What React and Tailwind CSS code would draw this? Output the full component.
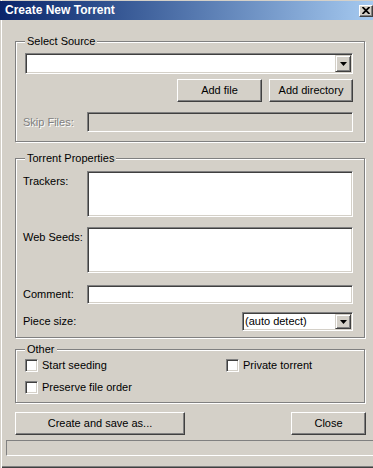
const sunken =
  'border border-t-[#808080] border-l-[#808080] border-b-white border-r-white shadow-[inset_1px_1px_0_#404040,inset_-1px_-1px_0_#d4d0c8]'
const raised =
  'border border-t-white border-l-white border-b-[#404040] border-r-[#404040] shadow-[inset_-1px_-1px_0_#808080] bg-[#d4d0c8]'
const group =
  'border border-[#808080] shadow-[inset_1px_1px_0_#fff,1px_1px_0_#fff] p-0 m-0 min-w-0'

function DropButton() {
  return (
    <div className="w-[16px] flex items-center justify-center bg-[#d4d0c8] border border-t-[#d4d0c8] border-l-[#d4d0c8] border-b-[#404040] border-r-[#404040] shadow-[inset_1px_1px_0_#fff,inset_-1px_-1px_0_#808080]">
      <svg width="7" height="4" viewBox="0 0 7 4">
        <polygon points="0,0 7,0 3.5,4" fill="#000" />
      </svg>
    </div>
  )
}

function Combo({ className, children }) {
  return (
    <div className={`${sunken} bg-white flex p-[1px] ${className}`}>
      <div className="flex-1 flex items-center pl-[1px]">{children}</div>
      <DropButton />
    </div>
  )
}

function Button({ className, children }) {
  return (
    <div className={`${raised} flex items-center justify-center h-[23px] ${className}`}>
      {children}
    </div>
  )
}

function Check({ label, className = '' }) {
  return (
    <div className={`flex items-center gap-[4px] ${className}`}>
      <div className={`${sunken} bg-white w-[13px] h-[13px]`} />
      <span>{label}</span>
    </div>
  )
}

function Legend({ children }) {
  return (
    <legend className="ml-[9px] px-[2px] leading-[13px] bg-[#d4d0c8]">{children}</legend>
  )
}

export default function App() {
  return (
    <div className="w-[373px] h-[468px] overflow-hidden bg-[#d4d0c8] flex flex-col text-[11px] leading-[13px] text-black font-['Liberation_Sans',Arial,sans-serif] shadow-[inset_1px_0_0_#d4d0c8,inset_2px_0_0_#fff,inset_0_-1px_0_#404040,inset_0_-2px_0_#808080]">
      {/* title bar */}
      <div className="mt-[1px] h-[19px] flex items-center pl-[5px] bg-linear-to-r from-[#0a246a] to-[#a6caf0]">
        <span className="text-white font-bold text-[12px]">Create New Torrent</span>
        <div className={`${raised} ml-auto w-[14px] h-[12px] flex items-center justify-center`}>
          <svg width="8" height="7" viewBox="0 0 8 7">
            <path d="M0.5 0 L7.5 7 M7.5 0 L0.5 7" stroke="#000" strokeWidth="1.8" />
          </svg>
        </div>
      </div>

      <div className="pl-[15px] pr-[8px] flex flex-col">
        {/* Select Source */}
        <fieldset className={`${group} mt-[15px]`}>
          <Legend>Select Source</Legend>
          <div className="flex flex-col pl-[9px] pr-[11px] pb-[9px]">
            <Combo className="mt-[5px] h-[21px]" />
            <div className="mt-[5px] flex justify-end gap-[7px]">
              <Button className="w-[85px]">Add file</Button>
              <Button className="w-[84px]">Add directory</Button>
            </div>
            <div className="mt-[10px] flex items-center">
              <span className="w-[64px] -ml-[2px] text-[#808080] [text-shadow:1px_1px_0_#fff]">
                Skip Files:
              </span>
              <div className={`${sunken} flex-1 h-[20px] bg-[#d4d0c8]`} />
            </div>
          </div>
        </fieldset>

        {/* Torrent Properties */}
        <fieldset className={`${group} mt-[10px]`}>
          <Legend>Torrent Properties</Legend>
          <div className="flex flex-col pl-[7px] pr-[11px] pb-[6px]">
            <div className="mt-[6px] flex">
              <span className="w-[64px] pt-[4px]">Trackers:</span>
              <div className={`${sunken} flex-1 h-[46px] bg-white`} />
            </div>
            <div className="mt-[10px] flex">
              <span className="w-[64px] pt-[4px]">Web Seeds:</span>
              <div className={`${sunken} flex-1 h-[46px] bg-white`} />
            </div>
            <div className="mt-[12px] flex items-center">
              <span className="w-[64px]">Comment:</span>
              <div className={`${sunken} flex-1 h-[19px] bg-white`} />
            </div>
            <div className="mt-[8px] flex items-center">
              <span className="flex-1">Piece size:</span>
              <Combo className="w-[111px] h-[19px]">(auto detect)</Combo>
            </div>
          </div>
        </fieldset>

        {/* Other */}
        <fieldset className={`${group} mt-[5px]`}>
          <Legend>Other</Legend>
          <div className="flex flex-col pl-[9px] pb-[8px]">
            <div className="mt-[3px] flex">
              <Check label="Start seeding" className="w-[201px]" />
              <Check label="Private torrent" />
            </div>
            <Check label="Preserve file order" className="mt-[9px]" />
          </div>
        </fieldset>

        <div className="mt-[9px] flex justify-between">
          <Button className="w-[170px]">Create and save as...</Button>
          <Button className="w-[75px] mr-[-1px]">Close</Button>
        </div>
      </div>

      {/* status bar */}
      <div className="mt-[5px] ml-[6px] h-[16px] border-t border-l border-t-[#808080] border-l-[#808080] border-b border-b-white" />
    </div>
  )
}
